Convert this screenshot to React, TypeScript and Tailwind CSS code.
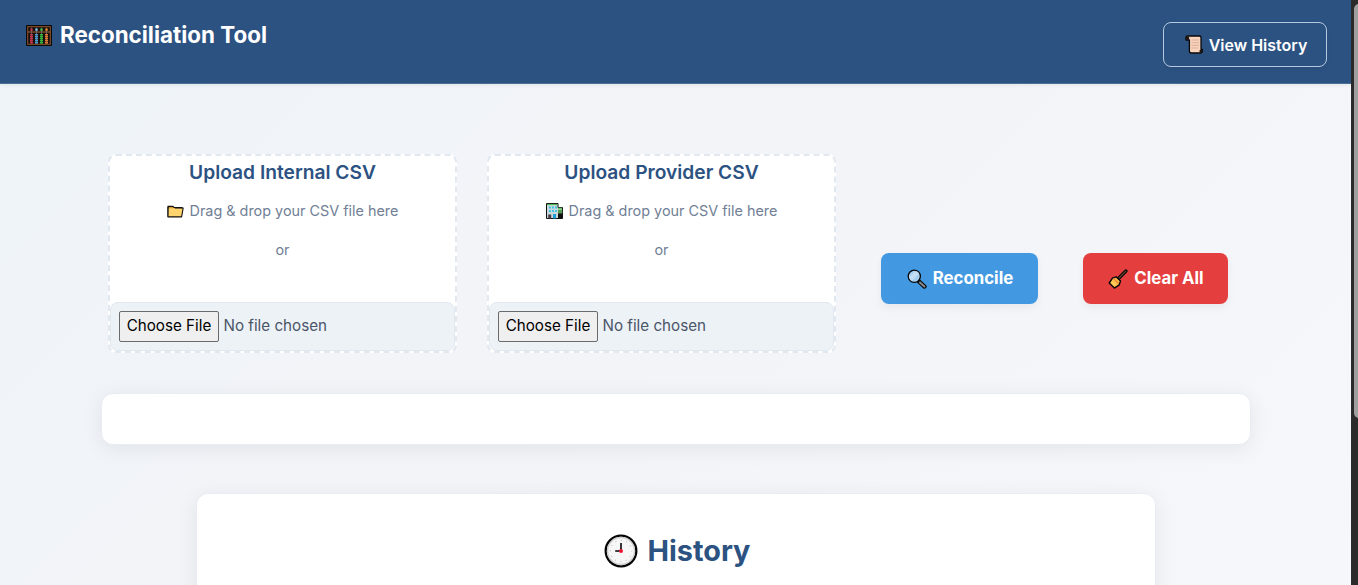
import type { ReactNode } from 'react';

function Abacus() {
  const rods = [
    { x: 5, color: '#c9304a', top: '#c9304a' },
    { x: 10, color: '#4a9fd8', top: '#7cc8f0' },
    { x: 15, color: '#2fb83c', top: '#3cc44a' },
    { x: 20, color: '#e27a35', top: '#f08a35' },
  ];
  return (
    <svg className="h-[21px] w-[26px] shrink-0" viewBox="0 0 26 21">
      <rect width="26" height="21" rx="1" fill="#090909" />
      <rect x="1.7" y="1.7" width="22.6" height="17.6" fill="#17100d" stroke="#93552f" strokeWidth="1" />
      <path d="M2 7h22" stroke="#a8693f" strokeWidth="1" />
      {rods.map((r) => (
        <g key={r.x}>
          <path d={`M${r.x + 0.5} 2.5v16`} stroke="#777" strokeWidth=".7" />
          <path d={`M${r.x + 0.5} 3.5v2.3`} stroke={r.top} strokeWidth="2.4" />
          <path d={`M${r.x + 0.5} 9v9.5`} stroke={r.color} strokeWidth="3" strokeDasharray="1.6 .4" />
        </g>
      ))}
    </svg>
  );
}

function Scroll() {
  return (
    <svg className="h-[19px] w-[19px] shrink-0" viewBox="0 0 19 19">
      <path d="M2.5 1h12q1.5 0 1.5 1.6V14.5h1.4v1.7q0 1.8-1.8 1.8H6.3q-1.9 0-1.9-1.8V5H1V2.6Q1 1 2.5 1Z" fill="#f8d3bd" stroke="#080808" strokeWidth="1.3" strokeLinejoin="round" />
      <path d="M.8 1.7q2-1 3.3.5v2.5H.8Z" fill="#1c1512" />
      <path d="M14.6 15h3v1.5q-.4 1.3-1.6 1.3h-1.4Z" fill="#1c1512" />
      <path d="M6.5 5h7.5M6.5 7.7h7.5M6.5 10.4h7.5M6.5 13h6.5" stroke="#d6a78f" strokeWidth=".8" />
    </svg>
  );
}

function Folder() {
  return (
    <svg className="h-[13px] w-[17px] shrink-0" viewBox="0 0 17 13">
      <path d="M1 11.8V1.4h5l1.2 1.2H15v2" fill="#d49b31" stroke="#111" strokeWidth="1.1" />
      <path d="M1.5 3.2h14.7l-1.6 8.7H1Z" fill="#ffd36d" />
      <path d="M8 3h8.2l-1.6 8.9H1V2" fill="none" stroke="#111" strokeWidth="1.1" strokeLinejoin="round" />
    </svg>
  );
}

function Offices() {
  return (
    <svg className="h-[16px] w-[17px] shrink-0" viewBox="0 0 17 16">
      <path d="M.5.5H12v4h4.5v11H.5Z" fill="#c6d8da" stroke="#101010" />
      <path d="M1 1.5h10.5" stroke="#51b958" strokeWidth="1.2" />
      <path d="M12 5.5h4" stroke="#62c763" strokeWidth="1.6" />
      <path d="M12 6.8h4.3v3.5H12z" fill="#4f9a50" />
      <path d="M12 10.3h4.5v5.2H12Z" fill="#101010" />
      <path d="M3 3.5h2v2H3zM6 3.5h2v2H6zM9 3.5h2v2H9zM3 7h2v2H3zM6 7h2v2H6zM9 7h2v2H9z" fill="#45c5e5" />
      <path d="M2.2 11.5h3v4h-3z" fill="#4b3b48" />
      <path d="M7 11h3v4.5H7z" fill="#219cd4" />
    </svg>
  );
}

function Magnifier() {
  return (
    <svg className="h-[20px] w-[20px] shrink-0" viewBox="0 0 20 20">
      <path d="m11.5 12 6 5.6" stroke="#080808" strokeWidth="4.2" strokeLinecap="round" />
      <path d="m13 13.4 4.4 4.1" stroke="#85888d" strokeWidth="2.1" strokeLinecap="round" />
      <circle cx="7.3" cy="7.3" r="6.1" fill="#a5cff0" stroke="#080808" strokeWidth="1.3" />
      <path d="m2 8 6.5-6q2.5.4 3.8 2.6l-7.6 7.3Q2.2 10.8 2 8Z" fill="#cfe5f8" opacity=".7" />
    </svg>
  );
}

function Broom() {
  return (
    <svg className="h-[20px] w-[20px] shrink-0" viewBox="0 0 20 20">
      <path d="m10 10 7.9-8" stroke="#080808" strokeWidth="3.4" strokeLinecap="round" />
      <path d="m11 9 6.7-6.8" stroke="#70442f" strokeWidth="1.1" strokeLinecap="round" />
      <path d="m8 7.8 4.5 4.3-1.3 3.7-4.8 3.3L1.2 14l3.3-4.8Z" fill="#ffc04c" stroke="#080808" strokeWidth="1.4" strokeLinejoin="round" />
      <path d="m5.4 9.4 5.3 5.2" stroke="#e77b35" strokeWidth="1.2" />
      <path d="m4 13 3 3.2" stroke="#ffe08a" strokeWidth=".8" />
    </svg>
  );
}

function Clock() {
  return (
    <svg className="h-[34px] w-[34px] shrink-0" viewBox="0 0 34 34">
      <circle cx="17" cy="17" r="15.3" fill="#f7f7f7" stroke="#050505" strokeWidth="2.3" />
      <circle cx="17" cy="17" r="13.5" fill="none" stroke="#cfcfcf" strokeWidth="1.4" />
      <circle cx="17" cy="17" r="10.7" fill="none" stroke="#aaa" strokeWidth="1" strokeDasharray="1 4.602" strokeDashoffset=".5" />
      <path d="M17 17V9M17 17h-5.8" stroke="#050505" strokeWidth="1.6" />
      <circle cx="17" cy="17" r="2" fill="#ed1735" />
    </svg>
  );
}

function UploadCard({ title, icon }: { title: string; icon: ReactNode }) {
  return (
    <section className="flex h-[199px] w-[349px] flex-col rounded-lg border-2 border-dashed border-[#e2e8f0] bg-white text-center">
      <h2 className="mt-px text-[19.2px] leading-[31px] font-semibold text-[#2c5282]">{title}</h2>
      <p className="mt-[11px] flex h-6 items-center justify-center gap-[6px] text-[14.4px] text-[#718096]">
        {icon}
        <span>Drag &amp; drop your CSV file here</span>
      </p>
      <p className="mt-[15px] text-[14.4px] leading-6 text-[#718096]">or</p>
      <div className="mt-auto flex h-[49px] items-center rounded-lg border border-[#e2e8f0] bg-[#edf2f7] px-2 text-[15.2px] text-[#4a5568]">
        <button className="h-[31px] w-[100px] rounded-[2px] border border-[#6b6b6b] bg-[#efefef] text-black">Choose File</button>
        <span className="ml-[4.5px]">No file chosen</span>
      </div>
    </section>
  );
}

export default function App() {
  return (
    <div className="flex h-[585px] w-[1358px] overflow-hidden bg-[#2b2b2b] font-['Inter',sans-serif]">
      <div className="flex w-[1351px] shrink-0 flex-col bg-[linear-gradient(135deg,#eef4f8_0%,#f3f4f8_50%,#f5f7fa_100%)]">
        <header className="z-10 flex h-[84px] shrink-0 items-start justify-between border-b border-[#4b6d96] bg-[#2c5282] pr-6 pl-[26px] text-white shadow-[0_1px_4px_rgba(0,0,0,0.08)]">
          <h1 className="mt-[17px] flex items-center gap-2 text-[22.4px] leading-9 font-bold">
            <Abacus />
            Reconciliation Tool
          </h1>
          <button className="mt-[22px] flex h-[45px] w-[164px] items-center justify-center gap-[5px] rounded-lg border border-[#b5c8df] pl-[2px] text-base font-semibold shadow-[0_2px_4px_rgba(0,0,0,0.05)]">
            <Scroll />
            View History
          </button>
        </header>
        <main className="flex flex-col items-center pt-[70px]">
          <div className="flex w-[1135px] items-start">
            <UploadCard title="Upload Internal CSV" icon={<Folder />} />
            <div className="ml-[30px]">
              <UploadCard title="Upload Provider CSV" icon={<Offices />} />
            </div>
            <button className="mt-[99px] ml-[45px] flex h-[51px] w-[157px] shrink-0 items-center justify-center gap-[6px] rounded-lg bg-[#4299e1] pl-px text-[16.8px] font-bold text-white shadow-[0_4px_8px_rgba(0,0,0,0.05)]">
              <Magnifier />
              Reconcile
            </button>
            <button className="mt-[99px] ml-[45px] flex h-[51px] w-[145px] shrink-0 items-center justify-center gap-[6px] rounded-lg bg-[#e53e3e] pl-px text-[16.8px] font-bold text-white shadow-[0_4px_8px_rgba(0,0,0,0.05)]">
              <Broom />
              Clear All
            </button>
          </div>
          <section className="mt-[40px] h-[52px] w-[1150px] rounded-xl border border-[#e8edf3] bg-white shadow-[0_4px_20px_rgba(0,0,0,0.07)]" />
          <section className="mt-[48px] h-[180px] w-[960px] rounded-xl border border-[#e8edf3] bg-white pt-[34px] shadow-[0_4px_20px_rgba(0,0,0,0.07)]">
            <h2 className="flex items-center justify-center gap-[10px] pl-[3px] text-[28.8px] leading-[46px] font-bold text-[#2c5282]">
              <Clock />
              History
            </h2>
          </section>
        </main>
      </div>
      <div className="w-[7px] overflow-hidden pt-1 pl-[3px]">
        <div className="h-[414px] w-[10px] rounded-[5px] bg-[#9f9f9f]" />
      </div>
    </div>
  );
}
